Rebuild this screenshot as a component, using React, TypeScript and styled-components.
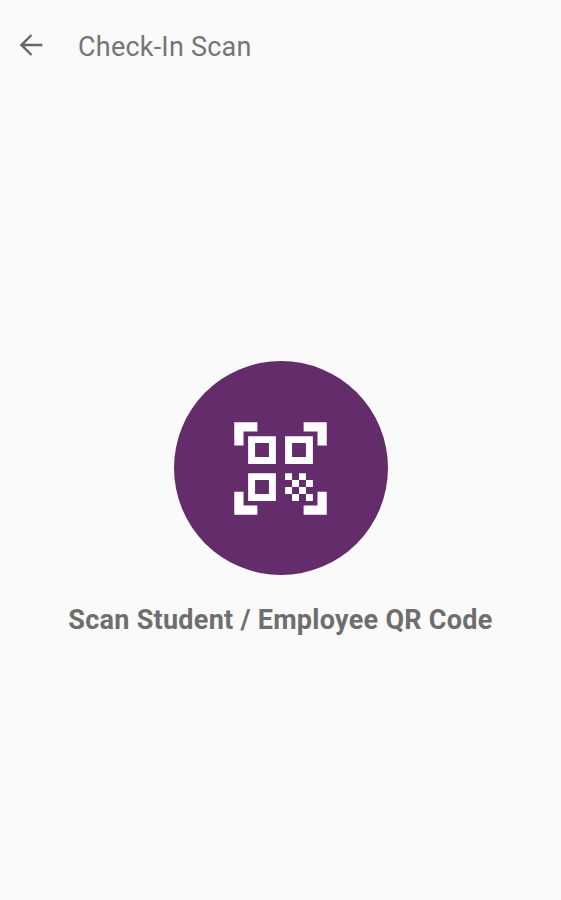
import React from "react";
import styled, { createGlobalStyle } from "styled-components";

const GlobalStyle = createGlobalStyle`
  body { margin: 0; background: #fafafa; font-family: Roboto, sans-serif; }
`;

const Screen = styled.div`
  display: flex;
  flex-direction: column;
  height: 900px;
  overflow: hidden;
  background: #fafafa;
`;

const TopBar = styled.header`
  display: flex;
  align-items: center;
  height: 90px;
  padding-left: 14px;
  gap: 30px;
`;

const BackButton = styled.button`
  display: flex;
  padding: 0;
  border: 0;
  background: none;
  color: #676767;
`;

const Title = styled.h1`
  margin: 3px 0 0;
  font-size: 27px;
  font-weight: 400;
  letter-spacing: 0.22px;
  line-height: 32px;
  color: #757575;
  white-space: nowrap;
`;

const Content = styled.main`
  display: flex;
  flex-direction: column;
  align-items: center;
  padding-top: 271.4px;
`;

const ScanButton = styled.button`
  display: grid;
  place-items: center;
  width: 214px;
  height: 214px;
  padding: 0;
  border: 0;
  border-radius: 50%;
  background: #642c6a;
  color: #fff;
`;

const Caption = styled.p`
  margin: 28.6px 0 0;
  font-size: 27px;
  font-weight: 700;
  letter-spacing: 0.27px;
  line-height: 32px;
  color: #6e6e6e;
  white-space: nowrap;
`;

const BackIcon = () => (
  <svg width="34" height="34" viewBox="0 0 24 24" fill="currentColor">
    <path d="M20 11.200H7.400l5.500-5.650L11.800 4.400 4 12l7.800 7.600 1.100-1.150L7.400 12.800H20z" />
  </svg>
);

const QrScanIcon = () => (
  <svg width="111" height="111" viewBox="0 0 24 24" fill="currentColor">
    <path d="M9.5 6.5v3h-3v-3h3M11 5H5v6h6V5zm-1.500 9.500v3h-3v-3h3M11 13H5v6h6v-6zm6.500-6.500v3h-3v-3h3M19 5h-6v6h6V5zm-6 8h1.500v1.500H13V13zm1.500 1.500H16V16h-1.500v-1.500zM16 13h1.500v1.500H16V13zm-3 3h1.500v1.500H13V16zm1.500 1.500H16V19h-1.500v-1.500zM16 16h1.500v1.500H16V16zm1.500-1.500H19V16h-1.500v-1.500zm0 3H19V19h-1.500v-1.500zM22 7h-2V4h-3V2h5v5zm0 15v-5h-2v3h-3v2h5zM2 22h5v-2H4v-3H2v5zM2 2v5h2V4h3V2H2z" />
  </svg>
);

export default function App() {
  return (
    <Screen>
      <GlobalStyle />
      <TopBar>
        <BackButton aria-label="Back"><BackIcon /></BackButton>
        <Title>Check-In Scan</Title>
      </TopBar>
      <Content>
        <ScanButton aria-label="Scan QR code"><QrScanIcon /></ScanButton>
        <Caption>Scan Student / Employee QR Code</Caption>
      </Content>
    </Screen>
  );
}
